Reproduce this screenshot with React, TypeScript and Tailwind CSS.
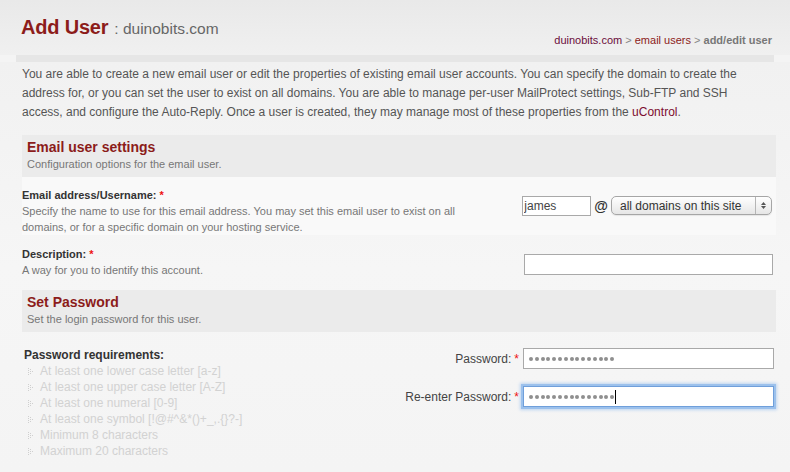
import React from 'react';

const requirements = [
  'At least one lower case letter [a-z]',
  'At least one upper case letter [A-Z]',
  'At least one numeral [0-9]',
  'At least one symbol [!@#^&*()+_,.{}?-]',
  'Minimum 8 characters',
  'Maximum 20 characters',
];

function Bullet() {
  return (
    <svg width="6" height="7" viewBox="0 0 6 7" className="shrink-0">
      <g fill="#cfcfcf">
        <rect x="0" y="0" width="1" height="1" />
        <rect x="0" y="2" width="1" height="1" />
        <rect x="0" y="4" width="1" height="1" />
        <rect x="0" y="6" width="1" height="1" />
        <rect x="2" y="1" width="1" height="1" />
        <rect x="2" y="3" width="1" height="1" />
        <rect x="2" y="5" width="1" height="1" />
        <rect x="4" y="3" width="1" height="1" />
      </g>
    </svg>
  );
}

function SectionHeader({ title, sub }: { title: string; sub: string }) {
  return (
    <div className="bg-[#ebebeb] px-[5px] pt-[4px] h-[42px]">
      <h2 className="text-[14px] leading-[17px] font-bold text-[#8c1c1a]">{title}</h2>
      <p className="text-[11px] leading-[16px] text-[#777]">{sub}</p>
    </div>
  );
}

function Req() {
  return <span className="text-[#e11] ml-[3px]">*</span>;
}

function Dots({ focused }: { focused?: boolean }) {
  return (
    <div
      className={
        'w-[251px] h-[21px] bg-white flex items-center pl-[5px] ' +
        (focused
          ? 'border border-[#6f9fdb] shadow-[0_0_0_2px_#9cc1ec,0_0_3px_3px_#bcd4f1]'
          : 'border border-[#a9a9a9]')
      }
    >
      <div className="flex gap-[1.8px]">
        {Array.from({ length: 15 }).map((_, i) => (
          <span key={i} className="w-[4px] h-[4px] rounded-full bg-[#8f8f8f]" />
        ))}
      </div>
      {focused && <span className="w-px h-[14px] bg-black ml-[1px]" />}
    </div>
  );
}

export default function App() {
  return (
    <div
      className="w-[790px] h-[472px] overflow-hidden bg-[#f4f4f4] text-[#555] flex flex-col"
      style={{ fontFamily: '"Liberation Sans", Arial, sans-serif' }}
    >
      <div className="bg-gradient-to-b from-[#e9e9e9] to-[#f0f0f0] h-[55px] shrink-0 px-[21px] flex items-end justify-between pb-[7px]">
        <div className="flex items-baseline self-start mt-[12px]">
          <h1 className="text-[20px] font-bold text-[#8c1c1a] tracking-[-0.2px]">Add User</h1>
          <span className="text-[15.5px] text-[#666] ml-[6px]">: duinobits.com</span>
        </div>
        <div className="text-[11px] mr-[-3px]">
          <span className="text-[#6b0d3b]">duinobits.com</span>
          <span className="text-[#888]"> &gt; </span>
          <span className="text-[#8c1c1a]">email users</span>
          <span className="text-[#888]"> &gt; </span>
          <span className="text-[#777] font-bold">add/edit user</span>
        </div>
      </div>

      <div className="mx-[16px] h-[7px] shrink-0 bg-[#e6e6e6]" />

      <div className="flex-1 px-[22px] pr-[14px] bg-gradient-to-b from-[#f1f1f1] via-[#f6f6f6] to-[#f4f4f4]">
        <p className="pt-[3px] text-[12px] leading-[19px] text-[#555] whitespace-nowrap">
          You are able to create a new email user or edit the properties of existing email user accounts. You can specify the domain to create the
          <br />
          address for, or you can set the user to exist on all domains. You are able to manage per-user MailProtect settings, Sub-FTP and SSH
          <br />
          access, and configure the Auto-Reply. Once a user is created, they may manage most of these properties from the{' '}
          <span className="text-[#7d0c2f]">uControl</span>.
        </p>

        <div className="mt-[13px]">
          <SectionHeader title="Email user settings" sub="Configuration options for the email user." />
        </div>

        <div className="flex justify-between pt-[10px] bg-[#f9f9f9]">
          <div className="w-[460px]">
            <div className="text-[11px] leading-[16px] font-bold text-[#333]">
              Email address/Username:<Req />
            </div>
            <p className="text-[11px] leading-[16px] text-[#777]">
              Specify the name to use for this email address. You may set this email user to exist on all
              <br />
              domains, or for a specific domain on your hosting service.
            </p>
          </div>
          <div className="flex items-start pt-[9px] mr-[4px]">
            <input
              readOnly
              value="james"
              className="w-[69px] h-[20px] border border-[#a9a9a9] bg-white text-[12px] px-[1px] text-[#444] outline-none"
            />
            <span className="text-[14px] font-bold text-[#333] mx-[3px] leading-[20px]">@</span>
            <div className="w-[161px] h-[19px] rounded-[5px] border border-[#a6a6a6] bg-gradient-to-b from-white to-[#e6e6e6] flex items-center shadow-[0_1px_1px_rgba(0,0,0,0.08)]">
              <span className="flex-1 text-[12px] text-[#333] pl-[8px] leading-none whitespace-nowrap">all domains on this site</span>
              <div className="w-[16px] h-full border-l border-[#b5b5b5] flex flex-col items-center justify-center gap-[1px]">
                <svg width="5" height="3" viewBox="0 0 5 3"><path d="M0 3 L2.5 0 L5 3 Z" fill="#555" /></svg>
                <svg width="5" height="3" viewBox="0 0 5 3"><path d="M0 0 L2.5 3 L5 0 Z" fill="#555" /></svg>
              </div>
            </div>
          </div>
        </div>

        <div className="flex justify-between pt-[11px] pb-[12px]">
          <div>
            <div className="text-[11px] leading-[16px] font-bold text-[#333]">
              Description:<Req />
            </div>
            <p className="text-[11px] leading-[16px] text-[#777]">A way for you to identify this account.</p>
          </div>
          <input
            readOnly
            className="w-[249px] h-[21px] mt-[8px] mr-[3px] border border-[#a9a9a9] bg-white outline-none"
          />
        </div>

        <SectionHeader title="Set Password" sub="Set the login password for this user." />

        <div className="flex justify-between pt-[15px] pl-[2px]">
          <div>
            <div className="text-[12px] leading-[16px] font-bold text-[#333]">Password requirements:</div>
            <ul>
              {requirements.map((r) => (
                <li key={r} className="flex items-center gap-[6px] pl-[4px] text-[12px] leading-[16px] text-[#d2d2d2]">
                  <Bullet />
                  {r}
                </li>
              ))}
            </ul>
          </div>
          <div className="flex flex-col gap-[17px] pt-[1px] mr-[2px]">
            <div className="flex items-center">
              <span className="text-[12px] text-[#444] w-[130px] text-right">Password:</span>
              <span className="text-[#e11] text-[12px] ml-[3px] mr-[4px]">*</span>
              <Dots />
            </div>
            <div className="flex items-center">
              <span className="text-[12px] text-[#444] w-[130px] text-right">Re-enter Password:</span>
              <span className="text-[#e11] text-[12px] ml-[3px] mr-[4px]">*</span>
              <Dots focused />
            </div>
          </div>
        </div>
      </div>
    </div>
  );
}
